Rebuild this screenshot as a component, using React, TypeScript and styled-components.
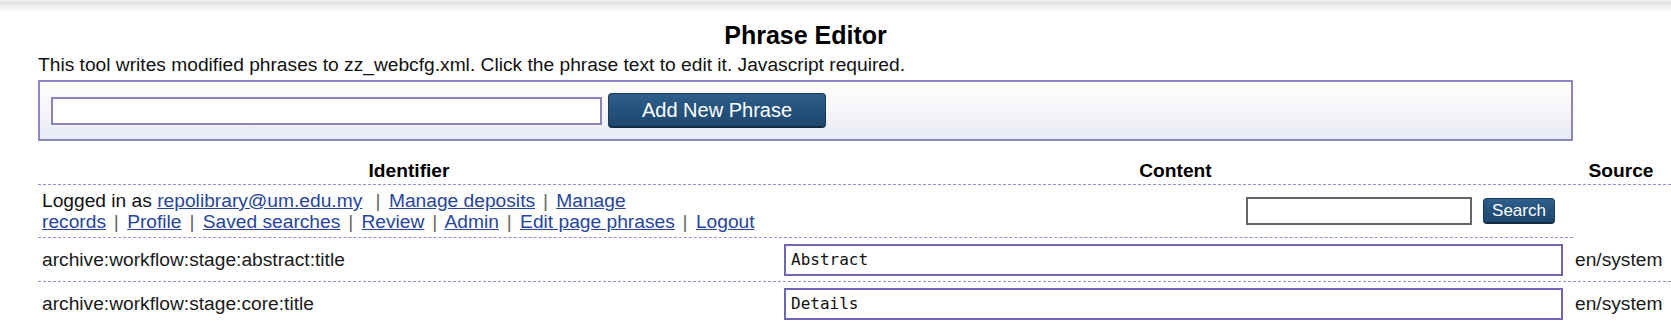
import React from 'react';
import styled, { createGlobalStyle } from 'styled-components';

const GlobalStyle = createGlobalStyle`
	html, body {
		margin: 0;
		padding: 0;
		background: #fff;
		overflow: hidden;
	}
	body {
		font-family: "Liberation Sans", Arial, sans-serif;
		color: #111;
	}
`;

const TopShade = styled.div`
	height: 12px;
	background: linear-gradient(to bottom, #f3f3f3 0, #e1e1e1 3px, #fff 12px);
`;

const Page = styled.div`
	width: 1535px;
	margin-left: 38px;
`;

const Title = styled.h1`
	margin: 8px 0 0;
	font-size: 25px;
	line-height: 30px;
	font-weight: bold;
	text-align: center;
	color: #000;
`;

const Intro = styled.p`
	margin: 4px 0 0;
	font-size: 19.2px;
	line-height: 22px;
`;

const AddForm = styled.form`
	margin-top: 4px;
	height: 61px;
	box-sizing: border-box;
	border: 2px solid #8a86c3;
	background: linear-gradient(to bottom, #fffdf8 0%, #f6f6fa 45%, #e8eaf4 100%);
	display: flex;
	align-items: center;
	gap: 6px;
	padding-left: 11px;
`;

const TextField = styled.input<{ $w: number; $h: number; $border: string }>`
	width: ${(p) => p.$w}px;
	height: ${(p) => p.$h}px;
	box-sizing: border-box;
	border: 2px solid ${(p) => p.$border};
	background: #fff;
	margin: 0;
	padding: 0 4px;
	font-family: "Liberation Sans", Arial, sans-serif;
	font-size: 17px;
	outline: none;
`;

const BlueButton = styled.button<{ $w: number; $h: number; $size: number }>`
	width: ${(p) => p.$w}px;
	height: ${(p) => p.$h}px;
	box-sizing: border-box;
	margin: 0;
	padding: 0;
	border: 1px solid #1b3a5a;
	border-bottom: 2px solid #142c45;
	border-radius: 4px;
	background: linear-gradient(to bottom, #2f5f8b 0%, #24527c 50%, #1e4870 100%);
	color: #fff;
	font-family: "Liberation Sans", Arial, sans-serif;
	font-size: ${(p) => p.$size}px;
	cursor: pointer;
`;

const PhraseTable = styled.div`
	margin-top: 17px;
	width: 1633px;
	font-size: 19.2px;
`;

const Row = styled.div<{ $head?: boolean }>`
	display: grid;
	grid-template-columns: 742px 791px 100px;
	align-items: center;
	border-bottom: 1px dashed #8f8fd6;
	${(p) => (p.$head ? 'font-weight: bold; color: #000;' : '')}
`;

const HeadCell = styled.div`
	padding: 2px 4px;
	line-height: 22px;
	text-align: center;
`;

const Cell = styled.div`
	padding: 6px 4px 5px;
	line-height: 22px;
	color: #1a1a1a;
`;

const PhraseBox = styled.div`
	width: 779px;
	height: 32px;
	box-sizing: border-box;
	border: 2px solid #6c66b6;
	background: #fff;
	padding-left: 5px;
	font-family: "DejaVu Sans Mono", "Liberation Mono", monospace;
	font-size: 16px;
	line-height: 28px;
	color: #111;
`;

const LoginBar = styled.div`
	width: 1535px;
	box-sizing: border-box;
	display: flex;
	justify-content: space-between;
	align-items: center;
	padding: 5px 18px 5px 4px;
	border-bottom: 1px dashed #8f8fd6;
`;

const LoginText = styled.div`
	line-height: 21px;
	color: #111;

	& a {
		color: #26459a;
		text-decoration: underline;
	}
`;

const Sep = styled.span<{ $wide?: boolean }>`
	color: #666;
	margin: 0 3px 0 ${(p) => (p.$wide ? 8 : 2.5)}px;
`;

const SearchBox = styled.div`
	display: flex;
	align-items: center;
	gap: 11px;
`;

const phrases = [
	{ id: 'archive:workflow:stage:abstract:title', text: 'Abstract', source: 'en/system' },
	{ id: 'archive:workflow:stage:core:title', text: 'Details', source: 'en/system' },
];

const App: React.FC = () => {
	return (
		<>
			<GlobalStyle />
			<TopShade />
			<Page>
				<Title>Phrase Editor</Title>
				<Intro>
					This tool writes modified phrases to zz_webcfg.xml. Click the phrase text to edit it. Javascript required.
				</Intro>
				<AddForm onSubmit={(e) => e.preventDefault()}>
					<TextField $w={551} $h={28} $border="#8884c2" />
					<BlueButton type="submit" $w={218} $h={35} $size={20}>
						Add New Phrase
					</BlueButton>
				</AddForm>
				<PhraseTable>
					<Row $head>
						<HeadCell>Identifier</HeadCell>
						<HeadCell>Content</HeadCell>
						<HeadCell>Source</HeadCell>
					</Row>
					<LoginBar>
						<LoginText>
							Logged in as <a href="#">repolibrary@um.edu.my</a>{' '}
							<Sep $wide>|</Sep> <a href="#">Manage deposits</a>{' '}
							<Sep>|</Sep> <a href="#">Manage<br />records</a>{' '}
							<Sep>|</Sep> <a href="#">Profile</a>{' '}
							<Sep>|</Sep> <a href="#">Saved searches</a>{' '}
							<Sep>|</Sep> <a href="#">Review</a>{' '}
							<Sep>|</Sep> <a href="#">Admin</a>{' '}
							<Sep>|</Sep> <a href="#">Edit page phrases</a>{' '}
							<Sep>|</Sep> <a href="#">Logout</a>
						</LoginText>
						<SearchBox>
							<TextField $w={226} $h={28} $border="#666" />
							<BlueButton type="button" $w={72} $h={26} $size={17}>
								Search
							</BlueButton>
						</SearchBox>
					</LoginBar>
					{phrases.map((p) => (
						<Row key={p.id}>
							<Cell>{p.id}</Cell>
							<Cell>
								<PhraseBox>{p.text}</PhraseBox>
							</Cell>
							<Cell>{p.source}</Cell>
						</Row>
					))}
				</PhraseTable>
			</Page>
		</>
	);
};

export default App;
